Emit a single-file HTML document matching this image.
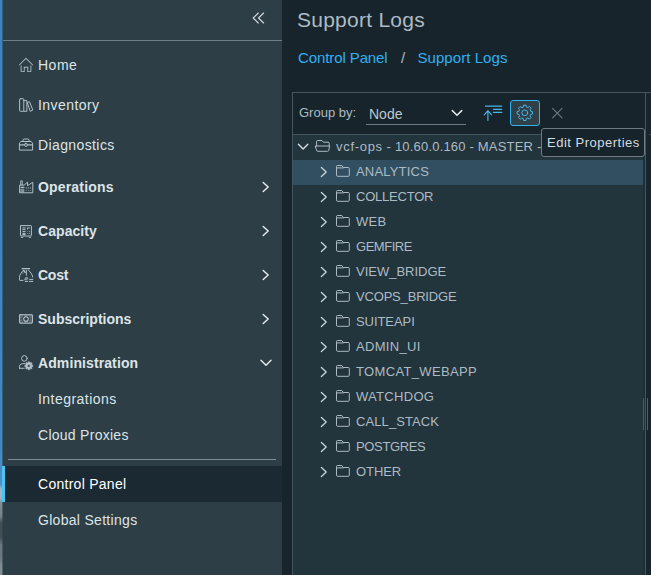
<!DOCTYPE html>
<html lang="en">
<head>
<meta charset="utf-8">
<title>Support Logs</title>
<style>
*{box-sizing:border-box;margin:0;padding:0}
html,body{width:651px;height:575px;overflow:hidden;background:#17242b;font-family:"Liberation Sans",sans-serif;}
body{position:relative;color:#e3e9ec}
.abs{position:absolute}
#strip{left:0;top:0;width:3px;height:575px;background:linear-gradient(#3a84c2 0,#3f88c4 440px,#4f8fc6 484px,#9db4c6 489px,#a3b3be 498px,#7e8b92 503px,#76838a 516px,#414e55 523px,#414e55 537px,#6b7880 545px,#6b7880 558px,#828d93 566px,#828d93 575px)}
#strip2{left:2px;top:0;width:1px;height:575px;background:#2d3e46;opacity:0.55}
#side{left:3px;top:0;width:279px;height:575px;background:#2d3e46}
#side .div1{left:0;top:40px;width:279px;height:1px;background:#6d7f88}
#side .div2{left:5px;top:459px;width:268px;height:1px;background:#7d8e97}
.nav{position:absolute;left:35px;font-size:14px;line-height:20px;color:#dde4e8;white-space:nowrap}
.nav.b{font-weight:bold}
#active{left:0;top:466px;width:279px;height:36px;background:#1b2a32}
#activebar{left:-1px;top:466px;width:3px;height:36px;background:#4cc3f3}
#title{left:297px;top:7px;font-size:21px;line-height:26px;letter-spacing:0.25px;color:#adbbc4;white-space:nowrap}
.bc{top:48px;font-size:15px;line-height:20px;letter-spacing:-0.1px;color:#2fb0f0;white-space:nowrap}
#panel{left:292px;top:92px;width:354px;height:490px;background:#22343c;border:1px solid #44555f}
#toolbar{left:293px;top:93px;width:352px;height:41px;background:#17242b}
#tbline{left:293px;top:134px;width:352px;height:1px;background:#44555f}
#right{left:646px;top:93px;width:5px;height:482px;background:#18252c}
#topext{left:646px;top:92px;width:5px;height:1px;background:#44555f}
#gap{left:643px;top:135px;width:2px;height:440px;background:#1f2f37}
#tick{left:649px;top:134px;width:2px;height:1px;background:#3a4b54}
.t13{font-size:13px;line-height:18px;color:#adbbc4;white-space:nowrap}
.row{position:absolute;left:356px;font-size:13px;line-height:18px;color:#adbbc4;white-space:nowrap}
#sel{left:293px;top:160px;width:350px;height:25px;background:#324f62}
#gearbtn{left:510px;top:100px;width:30px;height:26px;border:1px solid #2fb4f2;border-radius:3px;background:#313f47}
#tip{left:541px;top:128px;width:104px;height:29px;background:#17242b;border:1px solid #6f7b82;border-radius:3px;color:#d3dce1;font-size:13px;line-height:27px;padding-left:5px;letter-spacing:0.5px;white-space:nowrap}
#ov{position:absolute;left:0;top:0}
</style>
</head>
<body>
<div id="strip" class="abs"></div><div id="strip2" class="abs"></div>
<div id="side" class="abs">
<div class="div1 abs"></div><div class="div2 abs"></div><div id="active" class="abs"></div><div id="activebar" class="abs"></div>
<div class="nav" style="top:55px;letter-spacing:0.50px">Home</div>
<div class="nav" style="top:95px;letter-spacing:0.44px">Inventory</div>
<div class="nav" style="top:135px;letter-spacing:0.39px">Diagnostics</div>
<div class="nav b" style="top:177px;letter-spacing:0.17px">Operations</div>
<div class="nav b" style="top:221px;letter-spacing:0.06px">Capacity</div>
<div class="nav b" style="top:265px;letter-spacing:-0.25px">Cost</div>
<div class="nav b" style="top:309px;letter-spacing:0.00px">Subscriptions</div>
<div class="nav b" style="top:353px;letter-spacing:0.10px">Administration</div>
<div class="nav" style="top:389px;letter-spacing:0.46px">Integrations</div>
<div class="nav" style="top:425px;letter-spacing:0.27px">Cloud Proxies</div>
<div class="nav" style="top:474px;letter-spacing:0.27px;color:#fff">Control Panel</div>
<div class="nav" style="top:510px;letter-spacing:0.30px">Global Settings</div>
</div>
<div id="title" class="abs">Support Logs</div>
<div class="bc abs" style="left:298px">Control Panel</div>
<div class="bc abs" style="left:401px;color:#adbbc4">/</div>
<div class="bc abs" style="left:417.5px;letter-spacing:0.06px">Support Logs</div>
<div id="panel" class="abs"></div><div id="toolbar" class="abs"></div><div id="tbline" class="abs"></div><div id="right" class="abs"></div><div id="topext" class="abs"></div><div id="gap" class="abs"></div><div id="tick" class="abs"></div><div id="sel" class="abs"></div>
<div class="t13 abs" style="left:299px;top:104px">Group by:</div>
<div class="t13 abs" style="left:369px;top:105px;font-size:14px;color:#bcc8cf">Node</div>
<div class="abs" style="left:366px;top:124px;width:100px;height:1px;background:#6b7b84"></div>
<div id="gearbtn" class="abs"></div>
<div class="row" style="left:336px;top:138px;letter-spacing:0.19px"><span style="letter-spacing:0.7px">vcf-ops</span> - 10.60.0.160 - MASTER -</div>
<div class="row" style="top:163px;letter-spacing:0.19px">ANALYTICS</div>
<div class="row" style="top:188px;letter-spacing:-0.22px">COLLECTOR</div>
<div class="row" style="top:213px;letter-spacing:0.30px">WEB</div>
<div class="row" style="top:238px;letter-spacing:-0.46px">GEMFIRE</div>
<div class="row" style="top:263px;letter-spacing:0.00px">VIEW_BRIDGE</div>
<div class="row" style="top:288px;letter-spacing:-0.18px">VCOPS_BRIDGE</div>
<div class="row" style="top:313px;letter-spacing:-0.07px">SUITEAPI</div>
<div class="row" style="top:338px;letter-spacing:0.32px">ADMIN_UI</div>
<div class="row" style="top:363px;letter-spacing:0.35px">TOMCAT_WEBAPP</div>
<div class="row" style="top:388px;letter-spacing:0.30px">WATCHDOG</div>
<div class="row" style="top:413px;letter-spacing:0.10px">CALL_STACK</div>
<div class="row" style="top:438px;letter-spacing:-0.35px">POSTGRES</div>
<div class="row" style="top:463px;letter-spacing:-0.08px">OTHER</div>
<svg id="ov" width="651" height="575" viewBox="0 0 651 575" fill="none" stroke-linecap="round" stroke-linejoin="round">
<path d="M258.3,13 L253.2,18 L258.3,23 M263.6,13 L258.5,18 L263.6,23" stroke="#d3dbdf" stroke-width="1.1"/>
<path d="M263.2,182.5 L268.2,187.0 L263.2,191.5" stroke="#e3e9ec" stroke-width="1.5"/>
<path d="M263.2,226.5 L268.2,231.0 L263.2,235.5" stroke="#e3e9ec" stroke-width="1.5"/>
<path d="M263.2,270.5 L268.2,275.0 L263.2,279.5" stroke="#e3e9ec" stroke-width="1.5"/>
<path d="M263.2,314.5 L268.2,319.0 L263.2,323.5" stroke="#e3e9ec" stroke-width="1.5"/>
<path d="M261,360.3 L266,365.2 L271,360.3" stroke="#e3e9ec" stroke-width="1.5"/>
<g transform="translate(18,57) scale(0.44444)" fill="#b3bfc6" stroke="none"><path d="M33.71,17.29l-15-15a1,1,0,0,0-1.41,0l-15,15a1,1,0,0,0,1.41,1.41L18,4.41,32.29,18.71a1,1,0,0,0,1.41-1.41Z"/><path d="M28,32h-5V22H13V32H8V18L6,20V32a2,2,0,0,0,2,2h7V24h6V34h7a2,2,0,0,0,2-2V19.76l-2-2Z"/></g>
<g transform="translate(18,97)" stroke="#b3bfc6" stroke-width="1"><rect x="1.6" y="1.7" width="4.2" height="12.6" rx="0.8"/><path d="M5.8,3.6 H8.9 V14.3 H5.8"/><path d="M9.6,5.3 L11.5,4.8 L14.8,13 L12.6,14.2 Z"/></g>
<g transform="translate(18,137)" stroke="#b3bfc6" stroke-width="1"><path d="M1.4,12.7 V6 L3,4.5 H13 L14.6,6 V12.7 Z"/><path d="M5,4.3 V3.2 Q5,2 6.2,2 H9.8 Q11,2 11,3.2 V4.3"/><path d="M1.8,7.8 H6.6 M9.4,7.8 H14.2" stroke-width="1.3"/><rect x="6.9" y="6.4" width="2.2" height="2.9" rx="0.5"/></g>
<g transform="translate(18,179)" stroke="#b3bfc6" stroke-width="1"><path d="M1.6,13.4 V6.1 H6.2 L9.5,3.2 V6.7 L14.8,3.2 V13.4 Z"/><path d="M2.5,6 V1.8 H4.4 V6" stroke-width="0.9" stroke-opacity="0.8" fill="#b3bfc6" fill-opacity="0.35"/><path d="M3.1,8.4 H5.9" stroke-width="1.1"/><path d="M3.1,10.2 H5.9 V13 H3.1 Z" fill="#b3bfc6" fill-opacity="0.5" stroke-width="0.6"/><path d="M8.3,8.4 V9.6 M10.4,8.4 V9.6 M12.5,8.4 V9.6 M8.3,11.4 V11.9 M10.4,11.4 V11.9 M12.5,11.4 V11.9" stroke-width="1.1" stroke-linecap="butt"/></g>
<g transform="translate(18,223)" stroke="#b3bfc6" stroke-width="1"><rect x="2.5" y="2.6" width="10.9" height="10.4" rx="0.5"/><path d="M3.2,14.4 H4.8 M11.2,14.4 H12.8" stroke-width="0.9"/><path d="M4.4,4.9 H7.6 M4.4,6.6 H7.6 M4.4,8.6 H7.6 M4.4,10.4 H7.6 M4.4,11.5 H7.6" stroke-width="1" stroke-linecap="butt"/><path d="M9.5,6.4 V4.9 H11.8 M9.5,8.6 H10.2 M11.1,8.6 H11.8 M9.5,10.5 H10.2 M11.1,10.5 H11.8" stroke-width="1" stroke-linecap="butt"/></g>
<g transform="translate(18,267)" stroke="#b3bfc6" stroke-width="1"><path d="M4.2,1.7 H11.6" stroke-width="1.25"/><path d="M5.4,3.2 C3.4,5.4 1.5,7.6 1.5,10.6 V12.8 Q1.5,13.4 2.1,13.4 H5"/><path d="M10.4,3.2 C12.4,5 14.3,7.2 14.7,10"/><path d="M8.35,3.3 V8.3"/><path d="M5.7,3.6 L7.1,5.3" stroke-width="1.5"/><path d="M4.8,5.6 L5,6.8" stroke-width="0.7" stroke-opacity="0.7"/><path d="M6.7,12.4 L7.5,10.7 H9.9 L9.1,12.4 Z" fill="#b3bfc6" fill-opacity="0.5" stroke-width="0.7"/><path d="M7.2,14.4 H9.8 M11.4,14.4 H14.8 M11.6,12.4 H14.8" stroke-width="1"/></g>
<g transform="translate(18,311)"><rect x="1.5" y="3.7" width="13" height="8.5" rx="0.5" fill="#b3bfc6" fill-opacity="0.45" stroke="#b3bfc6" stroke-width="1"/><path d="M5.9,5.3 Q4.1,8 5.9,10.7 M10.1,5.3 Q11.9,8 10.1,10.7" stroke="#2d3e46" stroke-width="1.6" fill="none"/><circle cx="8" cy="8" r="2.3" fill="#2d3e46" stroke="#b3bfc6" stroke-width="1.1"/><path d="M3.2,5.7 h0.01 M3.2,10.3 h0.01 M12.8,5.7 h0.01 M12.8,10.3 h0.01" stroke="#2d3e46" stroke-width="1"/><path d="M3,8 h0.01 M13,8 h0.01" stroke="#2d3e46" stroke-width="1.5"/></g>
<g transform="translate(18,355)" stroke="#b3bfc6" stroke-width="1"><circle cx="6.4" cy="3.4" r="2.8"/><path d="M1.5,13.3 V11.4 C1.5,9.4 3.4,8.5 6.6,8.5 M1.5,13.3 H6.2"/><path d="M9.88,7.84 L9.95,6.79 L11.65,6.79 L11.72,7.84 L12.25,8.06 L13.03,7.36 L14.24,8.57 L13.54,9.35 L13.76,9.88 L14.81,9.95 L14.81,11.65 L13.76,11.72 L13.54,12.25 L14.24,13.03 L13.03,14.24 L12.25,13.54 L11.72,13.76 L11.65,14.81 L9.95,14.81 L9.88,13.76 L9.35,13.54 L8.57,14.24 L7.36,13.03 L8.06,12.25 L7.84,11.72 L6.79,11.65 L6.79,9.95 L7.84,9.88 L8.06,9.35 L7.36,8.57 L8.57,7.36 L9.35,8.06 Z M10.80,9.50 a1.3,1.3 0 1,0 0.01,0 Z" fill="#b3bfc6" fill-rule="evenodd" stroke="#b3bfc6" stroke-width="0.5"/></g>
<path d="M452.3,110.6 L457,115.2 L461.7,110.6" stroke="#e3e9ec" stroke-width="1.5"/>
<path d="M485.5,106.1 H501.7 M493.4,109.3 H501.7 M493.4,112.4 H501.7 M487.9,120.4 V110.9 M484.3,114.9 L487.9,110.7 L491.5,114.9" stroke="#47b6e8" stroke-width="1.15"/>
<path d="M523.29,106.89 L523.60,105.09 L526.00,105.09 L526.31,106.89 L527.91,107.55 L529.40,106.50 L531.10,108.20 L530.05,109.69 L530.71,111.29 L532.51,111.60 L532.51,114.00 L530.71,114.31 L530.05,115.91 L531.10,117.40 L529.40,119.10 L527.91,118.05 L526.31,118.71 L526.00,120.51 L523.60,120.51 L523.29,118.71 L521.69,118.05 L520.20,119.10 L518.50,117.40 L519.55,115.91 L518.89,114.31 L517.09,114.00 L517.09,111.60 L518.89,111.29 L519.55,109.69 L518.50,108.20 L520.20,106.50 L521.69,107.55 Z" stroke="#47b6e8" stroke-width="1" stroke-linejoin="round"/>
<circle cx="524.8" cy="112.8" r="2.9" stroke="#47b6e8" stroke-width="1"/>
<path d="M552.6,108.4 L562,117.9 M562,108.4 L552.6,117.9" stroke="#6b7b84" stroke-width="1.1"/>
<path d="M298.4,144.2 L303.1,148.9 L307.8,144.2" stroke="#d6dee2" stroke-width="1.4"/>
<path d="M316.6,146 V141.6 Q316.6,140.5 317.7,140.5 H322 L323.4,142.2 H328.2 Q329.2,142.2 329.2,143.2 V146 M315.6,146 H329.6 L328.8,150.2 Q328.6,151.3 327.5,151.3 H317.8 Q316.7,151.3 316.5,150.2 Z" stroke="#adbbc4" stroke-width="1"/>
<path d="M321.4,167.5 L326.2,172.0 L321.4,176.5" stroke="#ccd5da" stroke-width="1.3"/>
<path d="M336.5,167.5 V166.5 Q336.5,165.5 337.5,165.5 H341.8 L343.4,167.5 H348.3 Q349.3,167.5 349.3,168.5 V175.3 Q349.3,176.3 348.3,176.3 H337.5 Q336.5,176.3 336.5,175.3 Z M336.5,167.9 H343.4" stroke="#adbbc4" stroke-width="1"/>
<path d="M321.4,192.5 L326.2,197.0 L321.4,201.5" stroke="#ccd5da" stroke-width="1.3"/>
<path d="M336.5,192.5 V191.5 Q336.5,190.5 337.5,190.5 H341.8 L343.4,192.5 H348.3 Q349.3,192.5 349.3,193.5 V200.3 Q349.3,201.3 348.3,201.3 H337.5 Q336.5,201.3 336.5,200.3 Z M336.5,192.9 H343.4" stroke="#adbbc4" stroke-width="1"/>
<path d="M321.4,217.5 L326.2,222.0 L321.4,226.5" stroke="#ccd5da" stroke-width="1.3"/>
<path d="M336.5,217.5 V216.5 Q336.5,215.5 337.5,215.5 H341.8 L343.4,217.5 H348.3 Q349.3,217.5 349.3,218.5 V225.3 Q349.3,226.3 348.3,226.3 H337.5 Q336.5,226.3 336.5,225.3 Z M336.5,217.9 H343.4" stroke="#adbbc4" stroke-width="1"/>
<path d="M321.4,242.5 L326.2,247.0 L321.4,251.5" stroke="#ccd5da" stroke-width="1.3"/>
<path d="M336.5,242.5 V241.5 Q336.5,240.5 337.5,240.5 H341.8 L343.4,242.5 H348.3 Q349.3,242.5 349.3,243.5 V250.3 Q349.3,251.3 348.3,251.3 H337.5 Q336.5,251.3 336.5,250.3 Z M336.5,242.9 H343.4" stroke="#adbbc4" stroke-width="1"/>
<path d="M321.4,267.5 L326.2,272.0 L321.4,276.5" stroke="#ccd5da" stroke-width="1.3"/>
<path d="M336.5,267.5 V266.5 Q336.5,265.5 337.5,265.5 H341.8 L343.4,267.5 H348.3 Q349.3,267.5 349.3,268.5 V275.3 Q349.3,276.3 348.3,276.3 H337.5 Q336.5,276.3 336.5,275.3 Z M336.5,267.9 H343.4" stroke="#adbbc4" stroke-width="1"/>
<path d="M321.4,292.5 L326.2,297.0 L321.4,301.5" stroke="#ccd5da" stroke-width="1.3"/>
<path d="M336.5,292.5 V291.5 Q336.5,290.5 337.5,290.5 H341.8 L343.4,292.5 H348.3 Q349.3,292.5 349.3,293.5 V300.3 Q349.3,301.3 348.3,301.3 H337.5 Q336.5,301.3 336.5,300.3 Z M336.5,292.9 H343.4" stroke="#adbbc4" stroke-width="1"/>
<path d="M321.4,317.5 L326.2,322.0 L321.4,326.5" stroke="#ccd5da" stroke-width="1.3"/>
<path d="M336.5,317.5 V316.5 Q336.5,315.5 337.5,315.5 H341.8 L343.4,317.5 H348.3 Q349.3,317.5 349.3,318.5 V325.3 Q349.3,326.3 348.3,326.3 H337.5 Q336.5,326.3 336.5,325.3 Z M336.5,317.9 H343.4" stroke="#adbbc4" stroke-width="1"/>
<path d="M321.4,342.5 L326.2,347.0 L321.4,351.5" stroke="#ccd5da" stroke-width="1.3"/>
<path d="M336.5,342.5 V341.5 Q336.5,340.5 337.5,340.5 H341.8 L343.4,342.5 H348.3 Q349.3,342.5 349.3,343.5 V350.3 Q349.3,351.3 348.3,351.3 H337.5 Q336.5,351.3 336.5,350.3 Z M336.5,342.9 H343.4" stroke="#adbbc4" stroke-width="1"/>
<path d="M321.4,367.5 L326.2,372.0 L321.4,376.5" stroke="#ccd5da" stroke-width="1.3"/>
<path d="M336.5,367.5 V366.5 Q336.5,365.5 337.5,365.5 H341.8 L343.4,367.5 H348.3 Q349.3,367.5 349.3,368.5 V375.3 Q349.3,376.3 348.3,376.3 H337.5 Q336.5,376.3 336.5,375.3 Z M336.5,367.9 H343.4" stroke="#adbbc4" stroke-width="1"/>
<path d="M321.4,392.5 L326.2,397.0 L321.4,401.5" stroke="#ccd5da" stroke-width="1.3"/>
<path d="M336.5,392.5 V391.5 Q336.5,390.5 337.5,390.5 H341.8 L343.4,392.5 H348.3 Q349.3,392.5 349.3,393.5 V400.3 Q349.3,401.3 348.3,401.3 H337.5 Q336.5,401.3 336.5,400.3 Z M336.5,392.9 H343.4" stroke="#adbbc4" stroke-width="1"/>
<path d="M321.4,417.5 L326.2,422.0 L321.4,426.5" stroke="#ccd5da" stroke-width="1.3"/>
<path d="M336.5,417.5 V416.5 Q336.5,415.5 337.5,415.5 H341.8 L343.4,417.5 H348.3 Q349.3,417.5 349.3,418.5 V425.3 Q349.3,426.3 348.3,426.3 H337.5 Q336.5,426.3 336.5,425.3 Z M336.5,417.9 H343.4" stroke="#adbbc4" stroke-width="1"/>
<path d="M321.4,442.5 L326.2,447.0 L321.4,451.5" stroke="#ccd5da" stroke-width="1.3"/>
<path d="M336.5,442.5 V441.5 Q336.5,440.5 337.5,440.5 H341.8 L343.4,442.5 H348.3 Q349.3,442.5 349.3,443.5 V450.3 Q349.3,451.3 348.3,451.3 H337.5 Q336.5,451.3 336.5,450.3 Z M336.5,442.9 H343.4" stroke="#adbbc4" stroke-width="1"/>
<path d="M321.4,467.5 L326.2,472.0 L321.4,476.5" stroke="#ccd5da" stroke-width="1.3"/>
<path d="M336.5,467.5 V466.5 Q336.5,465.5 337.5,465.5 H341.8 L343.4,467.5 H348.3 Q349.3,467.5 349.3,468.5 V475.3 Q349.3,476.3 348.3,476.3 H337.5 Q336.5,476.3 336.5,475.3 Z M336.5,467.9 H343.4" stroke="#adbbc4" stroke-width="1"/>
<path d="M643.5,398 V430 M647.5,398 V430" stroke="#4d5e67" stroke-width="1" stroke-linecap="butt"/>
</svg>
<div id="tip" class="abs">Edit Properties</div>
</body>
</html>
